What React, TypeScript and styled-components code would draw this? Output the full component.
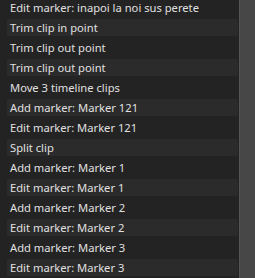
import React from "react";
import styled, { createGlobalStyle } from "styled-components";

const GlobalStyle = createGlobalStyle`
  html, body {
    margin: 0;
    padding: 0;
    background: #232323;
  }
`;

const entries = [
  "Edit marker: inapoi la noi sus perete",
  "Trim clip in point",
  "Trim clip out point",
  "Trim clip out point",
  "Move 3 timeline clips",
  "Add marker: Marker 121",
  "Edit marker: Marker 121",
  "Split clip",
  "Add marker: Marker 1",
  "Edit marker: Marker 1",
  "Add marker: Marker 2",
  "Edit marker: Marker 2",
  "Add marker: Marker 3",
  "Edit marker: Marker 3",
];

function App() {
  return (
    <>
      <GlobalStyle />
      <Panel>
        <List>
          {entries.map((text, i) => (
            <Row key={i} $striped={i % 2 === 1}>
              {text}
            </Row>
          ))}
        </List>
        <ScrollBar>
          <Thumb />
        </ScrollBar>
      </Panel>
    </>
  );
}

export default App;

const Panel = styled.div`
  display: flex;
  width: 255px;
  height: 278px;
  overflow: hidden;
  background: #232323;
  font-family: "Noto Sans", "Open Sans", sans-serif;
  font-size: 11.2px;
  color: #e0e0e0;
`;

const List = styled.div`
  flex: 1;
  display: flex;
  flex-direction: column;
  gap: 3px;
  padding: 0 1px 0 7px;
  margin-top: -1px;
`;

const Row = styled.div<{ $striped: boolean }>`
  flex: none;
  height: 17px;
  line-height: 18px;
  padding-left: 3px;
  white-space: nowrap;
  background: ${(p) => (p.$striped ? "#2b2b2b" : "transparent")};
`;

const ScrollBar = styled.div`
  width: 15px;
  display: flex;
  background: #2a2a2a;
  border-left: 1px solid #555555;
`;

const Thumb = styled.div`
  flex: 1;
  background: #474747;
`;
